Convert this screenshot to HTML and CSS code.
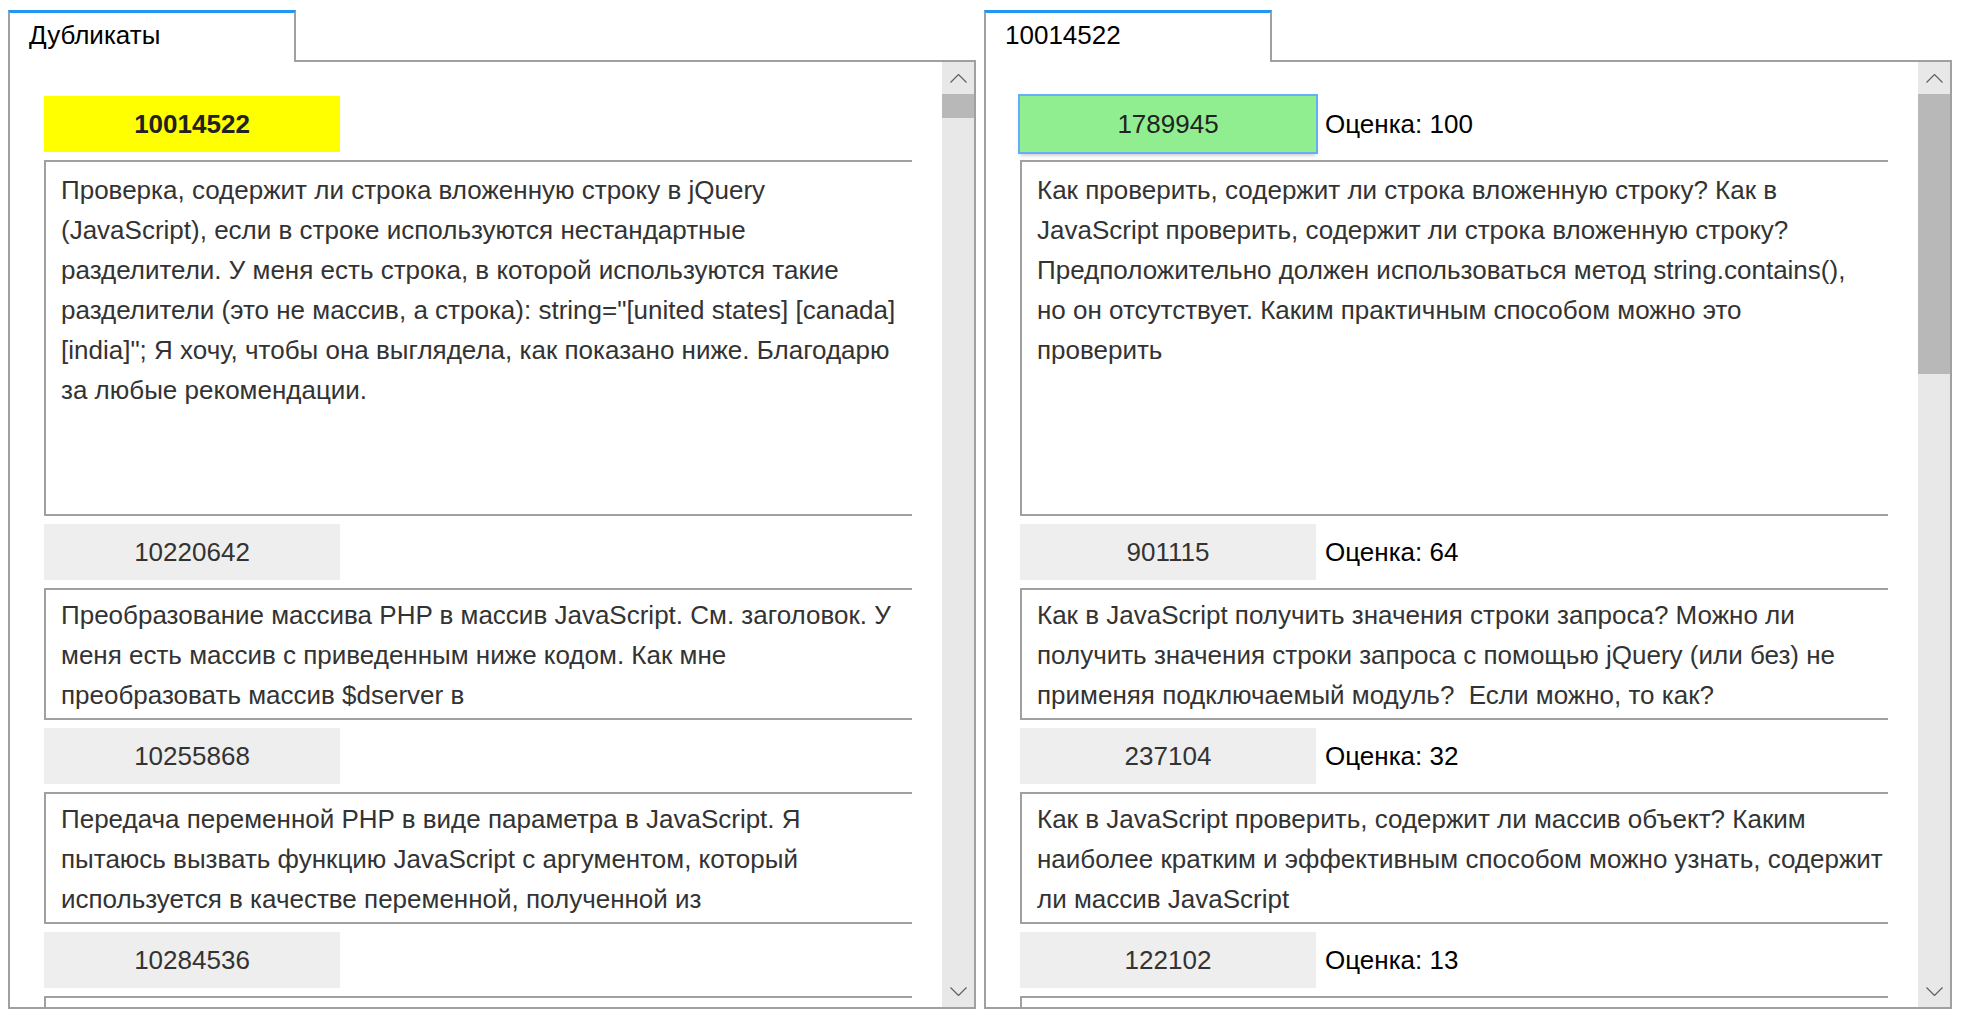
FILE: index.html
```html
<!DOCTYPE html>
<html lang="ru">
<head>
<meta charset="utf-8">
<title>Дубликаты</title>
<link rel="stylesheet" href="styles.css">
</head>
<body>
<div class="app">
  <section class="tabctl">
    <div class="tabstrip">
      <div class="tab">Дубликаты</div>
      <div class="strip-fill"></div>
    </div>
    <div class="panel">
      <div class="viewport">
        <div class="list">
          <div class="head"><div class="num num-yellow">10014522</div></div>
          <div class="text text-tall">Проверка, содержит ли строка вложенную строку в jQuery<br>(JavaScript), если в строке используются нестандартные<br>разделители. У меня есть строка, в которой используются такие<br>разделители (это не массив, а строка): string="[united states] [canada]<br>[india]"; Я хочу, чтобы она выглядела, как показано ниже. Благодарю<br>за любые рекомендации.</div>
          <div class="head"><div class="num">10220642</div></div>
          <div class="text">Преобразование массива PHP в массив JavaScript. См. заголовок. У<br>меня есть массив с приведенным ниже кодом. Как мне<br>преобразовать массив $dserver в</div>
          <div class="head"><div class="num">10255868</div></div>
          <div class="text">Передача переменной PHP в виде параметра в JavaScript. Я<br>пытаюсь вызвать функцию JavaScript с аргументом, который<br>используется в качестве переменной, полученной из</div>
          <div class="head"><div class="num">10284536</div></div>
          <div class="text"></div>
        </div>
      </div>
      <div class="scrollbar">
        <div class="sb-btn"><svg width="17" height="9" viewBox="0 0 17 9"><polyline points="0.5,8.5 8.5,0.5 16.5,8.5" fill="none" stroke="#606060" stroke-width="1.2"/></svg></div>
        <div class="sb-track"><div class="sb-thumb thumb-small"></div></div>
        <div class="sb-btn"><svg width="17" height="9" viewBox="0 0 17 9"><polyline points="0.5,0.5 8.5,8.5 16.5,0.5" fill="none" stroke="#606060" stroke-width="1.2"/></svg></div>
      </div>
    </div>
  </section>

  <section class="tabctl">
    <div class="tabstrip">
      <div class="tab">10014522</div>
      <div class="strip-fill"></div>
    </div>
    <div class="panel">
      <div class="viewport">
        <div class="list">
          <div class="head"><div class="num num-green">1789945</div><span class="score">Оценка: 100</span></div>
          <div class="text text-tall">Как проверить, содержит ли строка вложенную строку? Как в<br>JavaScript проверить, содержит ли строка вложенную строку?<br>Предположительно должен использоваться метод string.contains(),<br>но он отсутствует. Каким практичным способом можно это<br>проверить</div>
          <div class="head"><div class="num">901115</div><span class="score">Оценка: 64</span></div>
          <div class="text">Как в JavaScript получить значения строки запроса? Можно ли<br>получить значения строки запроса с помощью jQuery (или без) не<br>применяя подключаемый модуль?&nbsp; Если можно, то как?</div>
          <div class="head"><div class="num">237104</div><span class="score">Оценка: 32</span></div>
          <div class="text">Как в JavaScript проверить, содержит ли массив объект? Каким<br>наиболее кратким и эффективным способом можно узнать, содержит<br>ли массив JavaScript</div>
          <div class="head"><div class="num">122102</div><span class="score">Оценка: 13</span></div>
          <div class="text"></div>
        </div>
      </div>
      <div class="scrollbar">
        <div class="sb-btn"><svg width="17" height="9" viewBox="0 0 17 9"><polyline points="0.5,8.5 8.5,0.5 16.5,8.5" fill="none" stroke="#606060" stroke-width="1.2"/></svg></div>
        <div class="sb-track"><div class="sb-thumb thumb-big"></div></div>
        <div class="sb-btn"><svg width="17" height="9" viewBox="0 0 17 9"><polyline points="0.5,0.5 8.5,8.5 16.5,0.5" fill="none" stroke="#606060" stroke-width="1.2"/></svg></div>
      </div>
    </div>
  </section>
</div>
</body>
</html>
```

FILE: styles.css
```css
* { box-sizing: border-box; }

html, body {
  margin: 0;
  padding: 0;
  background: #ffffff;
}

body {
  font-family: "Liberation Sans", Arial, sans-serif;
  font-size: 26px;
  color: #000;
  width: 1968px;
  height: 1024px;
  overflow: hidden;
}

.app {
  display: flex;
  gap: 8px;
  padding: 10px 16px 0 8px;
}

.tabctl {
  width: 968px;
  display: flex;
  flex-direction: column;
}

.tabstrip {
  display: flex;
  height: 52px;
}

.tab {
  width: 288px;
  height: 52px;
  border-top: 3px solid #2196f3;
  border-left: 2px solid #a0a0a0;
  border-right: 2px solid #a0a0a0;
  padding: 6px 0 0 19px;
  line-height: 32px;
  color: #000;
  background: #fff;
}

.strip-fill {
  flex: 1;
  border-bottom: 2px solid #a0a0a0;
}

.panel {
  height: 947px;
  display: flex;
  border-left: 2px solid #a0a0a0;
  border-right: 2px solid #a0a0a0;
  border-bottom: 2px solid #a0a0a0;
}

.viewport {
  flex: 1;
  overflow: hidden;
  padding: 34px 30px 0 34px;
}

.list {
  display: flex;
  flex-direction: column;
  gap: 8px;
}

.head {
  display: flex;
  align-items: center;
  height: 56px;
}

.num {
  width: 296px;
  height: 56px;
  background: #eeeeee;
  color: #333;
  display: flex;
  align-items: center;
  justify-content: center;
}

.num-yellow {
  background: #ffff00;
  font-weight: bold;
  color: #222;
}

.num-green {
  background: #90ee90;
  color: #222;
  outline: 2px solid #66aef5;
  box-shadow: 0 3px 4px rgba(0, 0, 0, 0.25);
}

.score {
  margin-left: 9px;
  color: #000;
}

.text {
  height: 132px;
  flex: none;
  border: 2px solid #a0a0a0;
  border-right: none;
  padding: 5px 0 0 15px;
  line-height: 40px;
  color: #333;
  white-space: nowrap;
  overflow: hidden;
}

.text-tall {
  height: 356px;
  padding-top: 8px;
}

.scrollbar {
  width: 32px;
  background: #e8e8e8;
  display: flex;
  flex-direction: column;
}

.sb-btn {
  height: 32px;
  display: flex;
  align-items: center;
  justify-content: center;
}

.sb-track {
  flex: 1;
}

.sb-thumb {
  background: #b8b8b8;
}

.thumb-small { height: 24px; }
.thumb-big { height: 280px; }
```
